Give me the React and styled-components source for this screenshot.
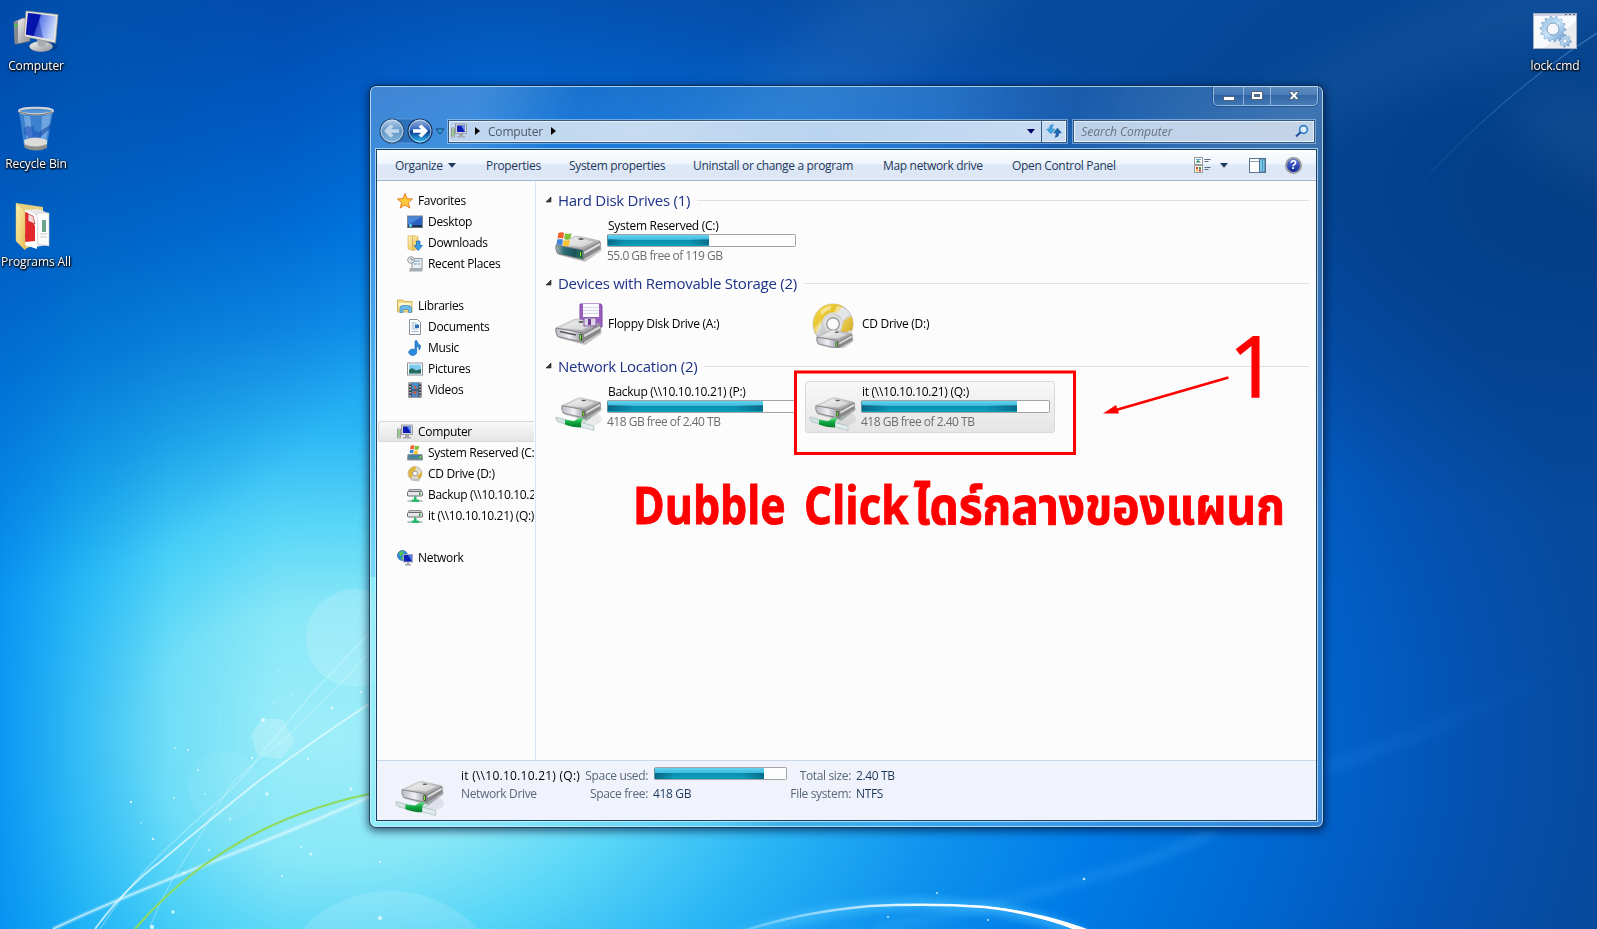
import React from "react";
import styled, { createGlobalStyle, css } from "styled-components";

const uiFont = `"Open Sans", "Noto Sans", "Liberation Sans", sans-serif`;

const GlobalStyle = createGlobalStyle`
  html, body { margin: 0; padding: 0; overflow: hidden; }
  body { font-family: ${uiFont}; font-size: 12px; color: #000; }
  * { box-sizing: border-box; }
  svg { display: block; flex: none; }
`;

/* ---------- Desktop ---------- */

const Desktop = styled.main`
  position: relative;
  width: 1597px;
  height: 929px;
  overflow: hidden;
  background:
    radial-gradient(ellipse 560px 620px at -60px -20px, rgba(0, 52, 145, 0.8), rgba(0, 60, 160, 0.5) 50%, rgba(0, 80, 190, 0) 100%),
    radial-gradient(ellipse 520px 330px at 1597px 190px, rgba(0, 50, 115, 0.6), rgba(0, 60, 140, 0) 100%),
    linear-gradient(90deg, rgba(0, 140, 242, 0.85) 0, rgba(0, 160, 245, 0.55) 80px, rgba(0, 180, 248, 0.2) 170px, rgba(0, 190, 250, 0) 280px),
    radial-gradient(ellipse 1290px 850px at 330px 735px, #9eeef9 0%, #88e7f7 15%, #5cd7f7 24%, #2ab6f5 36%, #0f94ee 48%, #007ce8 60%, #0066d0 75%, #0551b0 89%, #054a9c 100%);
`;

const Wallpaper = styled.svg`
  position: absolute;
  inset: 0;
`;

const Shortcut = styled.div`
  position: absolute;
  left: ${(p) => p.$x}px;
  top: ${(p) => p.$y}px;
  width: 90px;
  height: 72px;
  display: flex;
  flex-direction: column;
  align-items: center;
  justify-content: flex-end;
  gap: ${(p) => p.$gap}px;
  color: #fff;
  line-height: 16px;
  letter-spacing: -0.1px;
  white-space: nowrap;
  text-shadow: 0 1px 2px #000, 1px 1px 2px #000, 0 0 3px rgba(0, 0, 0, 0.7);
`;

/* ---------- Window ---------- */

const Window = styled.section`
  position: absolute;
  left: 369px;
  top: 85px;
  width: 955px;
  height: 743px;
  display: flex;
  flex-direction: column;
  padding: 0 6px 6px;
  border: 1px solid rgba(5, 30, 60, 0.8);
  border-radius: 7px;
  background:
    linear-gradient(90deg, rgba(150, 255, 250, 0.5), rgba(120, 240, 255, 0) 60%) 0 100% / 100% 250px no-repeat,
    linear-gradient(112deg, rgba(255, 255, 255, 0.16) 0, rgba(255, 255, 255, 0.16) 9%, rgba(255, 255, 255, 0) 17%, rgba(80, 180, 255, 0.16) 34%, rgba(80, 180, 255, 0.15) 46%, rgba(255, 255, 255, 0) 52%, rgba(0, 40, 110, 0.12) 57%, rgba(255, 255, 255, 0.06) 65%, rgba(255, 255, 255, 0.12) 75%),
    rgba(130, 185, 235, 0.2);
  box-shadow: inset 0 0 0 1px rgba(210, 240, 255, 0.75), 0 2px 9px 1px rgba(0, 15, 50, 0.65);
`;

const TitleBar = styled.header`
  display: flex;
  justify-content: flex-end;
  height: 32px;
  flex: none;
`;

const CaptionButtons = styled.div`
  display: flex;
  height: 20px;
  margin-right: -1px;
  border: 1px solid rgba(200, 225, 250, 0.65);
  border-top: 0;
  border-radius: 0 0 5px 5px;
  box-shadow: 0 0 0 1px rgba(10, 40, 90, 0.35);
  overflow: hidden;
`;

const CaptionButton = styled.div`
  width: ${(p) => p.$w}px;
  display: flex;
  align-items: center;
  justify-content: center;
  background: linear-gradient(rgba(255, 255, 255, 0.18), rgba(255, 255, 255, 0.08) 48%, rgba(0, 20, 70, 0.12) 50%, rgba(255, 255, 255, 0.06));
  & + & { border-left: 1px solid rgba(200, 225, 250, 0.55); }
`;

const NavRow = styled.div`
  display: flex;
  align-items: center;
  height: 31px;
  padding: 0 2px 5px 0;
  flex: none;
`;

const FieldShell = styled.div`
  display: flex;
  align-items: center;
  height: 23px;
  width: ${(p) => p.$w}px;
  margin-left: ${(p) => p.$ml || 0}px;
  border: 1px solid #34587f;
  box-shadow: 0 0 0 1px rgba(190, 220, 245, 0.5), inset 0 0 0 1px rgba(240, 248, 255, 0.8);
  background: ${(p) => p.$bg};
`;

const AddressText = styled.span`
  color: #4a5a68;
  margin: 0 8px 0 8px;
  letter-spacing: -0.2px;
`;

const FieldSpacer = styled.span` flex: 1; `;

const RefreshCell = styled.div`
  display: flex;
  align-items: center;
  justify-content: center;
  align-self: stretch;
  width: 25px;
  margin-left: 6px;
  border-left: 1px solid #34587f;
`;

const SearchHint = styled.span`
  flex: 1;
  padding-left: 7px;
  font-style: italic;
  color: #68747f;
  letter-spacing: -0.05px;
`;

const Client = styled.div`
  flex: 1;
  min-height: 0;
  display: flex;
  flex-direction: column;
  background: #fcfcfc;
  border: 1px solid #15405f;
  box-shadow: 0 0 0 1px rgba(215, 240, 255, 0.7);
`;

const Toolbar = styled.nav`
  display: flex;
  align-items: center;
  height: 31px;
  flex: none;
  padding: 0 14px 0 18px;
  color: #1e395b;
  border-bottom: 1px solid #a0b4d0;
  background: linear-gradient(#fdfeff 0, #eef5fd 46%, #dfe8f6 50%, #dce6f4 85%, #e6eefa 100%);
`;

const ToolItem = styled.span`
  display: flex;
  align-items: center;
  width: ${(p) => p.$w}px;
  gap: 5px;
  letter-spacing: -0.33px;
  white-space: nowrap;
`;

const ToolIcons = styled.div`
  display: flex;
  align-items: center;
  margin-left: auto;
`;

const IconGap = styled.span` width: ${(p) => p.$w}px; `;

const Body = styled.div`
  flex: 1;
  min-height: 0;
  display: flex;
`;

const NavPane = styled.aside`
  width: 159px;
  flex: none;
  padding: 9px 1px 0 0;
  border-right: 1px solid #d6e3f5;
`;

const navSelected = css`
  border: 1px solid #d9d9d9;
  border-right: 0;
  border-radius: 3px 0 0 3px;
  background: linear-gradient(#f8f8f8, #e5e5e5);
`;

const NavItem = styled.div`
  display: flex;
  align-items: center;
  gap: 5px;
  height: 21px;
  margin-top: ${(p) => (p.$first ? 21 : 0)}px;
  margin-left: 1px;
  padding-left: ${(p) => (p.$child ? 28 : 18)}px;
  border: 1px solid transparent;
  border-right: 0;
  white-space: nowrap;
  overflow: hidden;
  letter-spacing: -0.32px;
  ${(p) => p.$selected && navSelected}
`;

const Content = styled.div`
  flex: 1;
  min-width: 0;
  padding: 3px 7px 0 9px;
`;

const GroupHeader = styled.h2`
  display: flex;
  align-items: center;
  gap: 6px;
  height: 31px;
  margin: 0;
  font-size: 15px;
  line-height: 30px;
  font-weight: 400;
  color: #1e3287;
  letter-spacing: -0.26px;
  white-space: nowrap;
  &::after {
    content: "";
    flex: 1;
    height: 1px;
    background: #e0e0e2;
    margin: 2px 0 0 1px;
  }
`;

const TileRow = styled.div`
  display: flex;
  gap: 4px;
  height: 52px;
  padding-left: 6px;
`;

const Tile = styled.div`
  display: flex;
  align-items: center;
  gap: 4px;
  width: 250px;
  height: 52px;
  padding: 0 4px 0 3px;
  border: 1px solid ${(p) => (p.$selected ? "#d9d9d9" : "transparent")};
  border-radius: 3px;
  background: ${(p) => (p.$selected ? "linear-gradient(#f8f8f8, #e5e5e5)" : "none")};
`;

const TileText = styled.div`
  display: flex;
  flex-direction: column;
  margin-top: -1px;
  line-height: 17px;
  white-space: nowrap;
  letter-spacing: -0.28px;
`;

const TileName = styled.span`
  padding-left: 1px;
  line-height: 16px;
`;

const Muted = styled.span`
  color: #6d6d6d;
  letter-spacing: -0.5px;
`;

const Meter = styled.div`
  width: ${(p) => p.$w}px;
  height: 13px;
  border: 1px solid #a4a4a4;
  border-left-color: #5c8fa0;
  border-radius: 2px;
  background: #fdfdfd;
`;

const MeterFill = styled.div`
  height: 100%;
  background:
    linear-gradient(90deg, rgba(0, 60, 90, 0.5), rgba(0, 60, 90, 0) 18%, rgba(0, 60, 90, 0) 80%, rgba(0, 60, 90, 0.45)) 0 100% / 100% 55% no-repeat,
    linear-gradient(#66d2ee 0, #3bbbe0 45%, #0b8fae 50%, #0ba0bd 100%);
`;

const Details = styled.footer`
  display: flex;
  height: 60px;
  flex: none;
  padding: 5px 0 0 18px;
  border-top: 1px solid #c9d7ea;
  background: #f0f3fc;
`;

const DetailsGrid = styled.div`
  display: grid;
  grid-template-columns: 118px 69px 141px 62px 60px;
  grid-template-rows: 18px 18px;
  margin-left: 16px;
  align-items: center;
  white-space: nowrap;
  color: #1e395b;
  letter-spacing: -0.35px;
`;

const Label = styled.span`
  color: #5a6779;
  text-align: ${(p) => (p.$left ? "left" : "right")};
`;

const Value = styled.span`
  padding-left: ${(p) => p.$pad || 5}px;
  padding-bottom: ${(p) => p.$lift || 0}px;
`;

const DetailTitle = styled.span`
  color: #000;
  letter-spacing: 0.25px;
`;

const Annotations = styled.svg`
  position: absolute;
  inset: 0;
`;

/* ---------- Icons ---------- */

const Defs = () => (
  <defs>
    <linearGradient id="metal" x1="0" y1="0" x2="1" y2="1">
      <stop offset="0" stopColor="#fafafa" /><stop offset="1" stopColor="#8f8f92" />
    </linearGradient>
    <linearGradient id="screen" x1="0" y1="0" x2="1" y2="0.3">
      <stop offset="0" stopColor="#0a1ab8" /><stop offset="0.45" stopColor="#0514b0" /><stop offset="0.5" stopColor="#5f7bea" /><stop offset="1" stopColor="#c5d5fb" />
    </linearGradient>
    <linearGradient id="front" x1="0" y1="0" x2="1" y2="0">
      <stop offset="0" stopColor="#b9b9c2" /><stop offset="0.5" stopColor="#efeff6" /><stop offset="1" stopColor="#8e8e96" />
    </linearGradient>
    <linearGradient id="tealFront" x1="0" y1="0" x2="1" y2="0">
      <stop offset="0" stopColor="#a9b4b6" /><stop offset="0.3" stopColor="#2b6f78" /><stop offset="0.7" stopColor="#1c5058" /><stop offset="1" stopColor="#2d8a78" />
    </linearGradient>
    <linearGradient id="gold" x1="0" y1="0" x2="1" y2="1">
      <stop offset="0" stopColor="#f9de48" /><stop offset="1" stopColor="#cfa212" />
    </linearGradient>
    <linearGradient id="disc" x1="0" y1="0" x2="1" y2="1">
      <stop offset="0" stopColor="#f6f6f6" /><stop offset="0.5" stopColor="#c9c9c9" /><stop offset="1" stopColor="#efefef" />
    </linearGradient>
    <linearGradient id="folder" x1="0" y1="0" x2="1" y2="1">
      <stop offset="0" stopColor="#fdf3b4" /><stop offset="1" stopColor="#e8bd55" />
    </linearGradient>
    <linearGradient id="greenV" x1="0" y1="0" x2="0" y2="1">
      <stop offset="0" stopColor="#6fe08e" /><stop offset="0.5" stopColor="#0ea63f" /><stop offset="1" stopColor="#067a2a" />
    </linearGradient>
    <linearGradient id="backG" x1="0" y1="0" x2="0" y2="1">
      <stop offset="0" stopColor="#b4d0ea" /><stop offset="0.5" stopColor="#6496c6" /><stop offset="1" stopColor="#84b8e0" />
    </linearGradient>
    <linearGradient id="fwdG" x1="0" y1="0" x2="0" y2="1">
      <stop offset="0" stopColor="#9cb8e4" /><stop offset="0.48" stopColor="#2c5fb4" /><stop offset="0.52" stopColor="#0a3c92" /><stop offset="1" stopColor="#35c8f5" />
    </linearGradient>
    <linearGradient id="gearG" x1="0" y1="0" x2="1" y2="1">
      <stop offset="0" stopColor="#8fb4d8" /><stop offset="0.5" stopColor="#c8e6fa" /><stop offset="1" stopColor="#5a8cc8" />
    </linearGradient>
  </defs>
);

const ComputerBig = () => (
  <svg width="48" height="44" viewBox="0 0 48 44">
    <path d="M2 12 L11 8 L18 9 V31 L10 33 L3 34 Z" fill="url(#metal)" stroke="#777" strokeWidth=".6" />
    <path d="M2 12 L6 11 V33 L3 34 Z" fill="#85888c" /><circle cx="4" cy="15.500" r="1.300" fill="#3bdc2b" />
    <ellipse cx="31" cy="37" rx="15" ry="5" fill="#001a50" opacity=".3" />
    <ellipse cx="29" cy="36.500" rx="11.500" ry="5" fill="url(#metal)" stroke="#b8b8b8" strokeWidth=".6" />
    <path d="M25 29 L34 30.500 L33 37 L26 36 Z" fill="#a9acb2" />
    <path d="M14 1 L46 4.500 L43.500 33 L12 26.500 Z" fill="#e8e6e0" stroke="#97948e" strokeWidth=".7" />
    <path d="M16 3 L44 6.300 L41.500 30 L13.800 24.500 Z" fill="url(#screen)" />
    <path d="M16 3 L26 4 L31 28 L13.800 24.500 Z" fill="#0010a0" opacity=".35" />
  </svg>
);

const RecycleBin = () => (
  <svg width="40" height="46" viewBox="0 0 40 46">
    <path d="M3 5 L8 40 Q20 47 31 40 L37 5 Z" fill="#8fc0f0" opacity=".42" />
    <path d="M8 10 L11 35 L17 36 L14 10 Z M26 10 L25 36 L30 34 L35 9 Z" fill="#cfe6ff" opacity=".35" />
    <path d="M8 23q2-5 6-2q5-3 4 3q6 1 4 6q-1 6-6 4q-5 3-4-4q-6-1-4-7Z" fill="#1d50b8" opacity=".55" />
    <path d="M22 27 L35 18 L35 22 L23 32Z" fill="#144aa8" opacity=".6" />
    <path d="M8 34 Q19 29 31 34 L31 41 Q20 47 9 41 Z" fill="#dcdcd8" />
    <path d="M8 38 Q19 43 31 38 L31 42 Q20 47 9 42 Z" fill="#8f8f8c" />
    <ellipse cx="20" cy="5" rx="17" ry="3.200" fill="#6aa2dc" fillOpacity=".7" stroke="#d0d2d4" strokeWidth="2" />
    <path d="M3 6 Q20 12 37 6" fill="none" stroke="#76797c" strokeWidth="1.200" />
  </svg>
);

const ProgramsFolder = () => (
  <svg width="50" height="50" viewBox="0 0 50 50">
    <path d="M5 2 L32 6 V40 L14 48 Z" fill="#e6cf7c" />
    <path d="M15 9 L27 8 L37 12 V44 L24 46 Z" fill="#e8e8e8" />
    <path d="M26 12 L38 12 V45 L27 43 Z" fill="#fcfcfc" stroke="#c8c8c8" strokeWidth=".6" />
    <path d="M14 8 L26 15 V48 L14 44 Z" fill="#fff" />
    <path d="M14 11 L17 12 L24 25 V40 L14 41 Z" fill="#e2282c" />
    <path d="M17 13 L22 15 L24 23 L17 20 Z" fill="#f6d9d4" stroke="#c02c2c" strokeWidth=".7" />
    <path d="M31 19 h4 v12 h-4Z" fill="#6aa58c" /><path d="M29 33h7M29 36h7" stroke="#c5ccd2" />
    <path d="M5 2 L14 9 V33 L12 34 L14 36 V49 L5 40 Z" fill="url(#folder)" stroke="#d9b865" strokeWidth=".5" />
  </svg>
);

const gearPath = (cx, cy, n, r, R) => {
  const pts = [];
  for (let i = 0; i < n * 4; i++) {
    const a = (i / (n * 4)) * Math.PI * 2;
    const k = i % 4 < 2 ? R : r;
    pts.push(`${(cx + k * Math.cos(a)).toFixed(2)} ${(cy + k * Math.sin(a)).toFixed(2)}`);
  }
  return `M${pts.join("L")}Z`;
};

const LockCmd = () => (
  <svg width="46" height="40" viewBox="0 0 46 40">
    <rect x="1.500" y="2.500" width="43" height="35" fill="#f8f9fa" stroke="#a5adb8" />
    <rect x="2" y="3" width="42" height="2" fill="#ccd2df" />
    <path d="M33 3.500h2M37 3.500h2M41 3.500h2" stroke="#4c5f8c" />
    <path d="M44 10 V37 H12Z" fill="#dfe1e6" opacity=".6" />
    <path d={gearPath(21, 18, 14, 10.5, 13)} fill="url(#gearG)" stroke="#7ba3cc" strokeWidth=".6" />
    <circle cx="21" cy="18" r="6" fill="#f4f6f9" stroke="#7f9fc2" />
    <path d={gearPath(33, 30, 8, 4.4, 6.2)} fill="url(#gearG)" stroke="#5f8ab8" strokeWidth=".6" />
    <circle cx="33" cy="30" r="2.300" fill="#f4f6f9" stroke="#6f96c0" strokeWidth=".7" />
  </svg>
);

const Flag = ({ x = 0, y = 0, s = 1 }) => (
  <g transform={`translate(${x} ${y}) scale(${s})`}>
    <path d="M2 1 Q5 -0.500 8 1 L7 7 Q4 5.500 1 7Z" fill="#f0622c" />
    <path d="M9 1.300 Q12 3 16 1 L14.500 7 Q11 9 8 7.300Z" fill="#7fbf3a" />
    <path d="M.8 8 Q4 6.500 6.800 8 L5.800 14 Q3 12.500 0 13.500Z" fill="#3d86d8" />
    <path d="M7.800 8.300 Q11 10 14.200 8.300 L13 14 Q10 16 6.700 14.300Z" fill="#fcc52c" />
  </g>
);

const DriveBody = ({ x = 0, y = 0, s = 1, teal }) => (
  <g transform={`translate(${x} ${y}) scale(${s})`}>
    <path d="M3 17 L30 24 L47 12 L46 16 L30 27 L4 20Z" fill="#000" opacity=".22" />
    <path d="M1 10 L19 1.500 Q21 .8 24 1.200 L45 6 L28 15 Z" fill="url(#metal)" stroke="#9a9a9a" strokeWidth=".5" />
    <path d="M6 9.500 L20 3 L39 6.500 L27 12Z" fill="#f4f4f4" opacity=".55" />
    <path d="M28 15 L45 6 Q46.500 8 45.500 14 L28.500 24.500Z" fill="#88888b" />
    <path d="M29 18 L45 9" stroke="#d9d9db" strokeWidth="2.200" />
    <path d="M1 10 L28 15 L28.500 24.500 L2.500 18.500 Q0 14 1 10Z" fill={teal ? "url(#tealFront)" : "url(#front)"} stroke="#77777a" strokeWidth=".9" />
    <path d="M24.500 16 L27 16.500 V22.500 L24.500 22Z" fill="#1c3c18" />
    <path d="M25.600 17 V21.500" stroke="#7fee2c" strokeWidth="1.200" />
    <ellipse cx="26" cy="4" rx="2.600" ry=".9" fill="#5a5a5a" />
  </g>
);

const SystemDrive = () => (
  <svg width="48" height="48" viewBox="0 0 48 48">
    <DriveBody x={0} y={18} teal /><Flag x={1.5} y={15} s={0.95} />
  </svg>
);

const FloppyDrive = () => (
  <svg width="48" height="48" viewBox="0 0 48 48">
    <path d="M25 4 H46 L47 6 V27 H25 Z" fill="#9a5fc0" stroke="#7a48a6" />
    <rect x="28" y="4" width="16" height="13" fill="#fafafc" />
    <path d="M28 7.500h16M28 10.500h16M28 13.500h16" stroke="#cfcfe6" strokeWidth=".8" />
    <DriveBody x={0} y={18} />
    <rect x="29" y="18" width="12" height="8" fill="#ddd5e8" stroke="#8058a0" /><rect x="33" y="19" width="3" height="6" fill="#6a3c94" />
    <path d="M5 31.500 L21 35" stroke="#555" strokeWidth="1.400" />
  </svg>
);

const CdDrive = () => (
  <svg width="48" height="48" viewBox="-1 -1 48 48">
    <circle cx="23" cy="23" r="20" fill="url(#disc)" stroke="#b2b2b2" strokeWidth=".8" />
    <path d="M4 17 A20 20 0 0 1 33 5.500 L27 12 A11 11 0 0 0 13 18 L6 33 A20 20 0 0 1 4 17Z" fill="url(#gold)" />
    <path d="M41.500 15 A20 20 0 0 1 42 29 L30 33 L34 20Z" fill="url(#gold)" opacity=".9" />
    <path d="M13 16 A12 12 0 0 0 11 26 L7 33 L4 28Z" fill="#fff" opacity=".4" />
    <path d="M27 5 A18 18 0 0 1 40 13 L32 20 A10 10 0 0 0 24 12Z" fill="#fff" opacity=".5" />
    <path d="M10 11 Q14 6 21 4.500 L21 8 Q15 10 12 14Z" fill="#fff" opacity=".45" />
    <circle cx="23" cy="23" r="9" fill="#e4e4e4" opacity=".85" />
    <circle cx="23" cy="23" r="6.300" fill="#fafafa" stroke="#9c9c9c" strokeWidth="1.400" />
    <DriveBody x={6} y={28} s={0.8} />
  </svg>
);

const NetDrive = ({ w = 48 }) => (
  <svg width={w} height={w} viewBox="0 0 48 48">
    <ellipse cx="34" cy="36" rx="13" ry="7" fill="#000" opacity=".07" />
    <path d="M24 38 L30 32 L36 31 L35 35 L28 41Z" fill="#cfe3da" stroke="#9fbcae" strokeWidth=".5" />
    <DriveBody x={6} y={14} s={0.87} />
    <path d="M1 34 L12 37 V41.500 L3 39 Q0 37 1 34Z" fill="#d5e2e2" stroke="#9cb4b4" strokeWidth=".6" />
    <path d="M26 39.500 L39 43 V47.500 L26 44Z" fill="#e3ecec" stroke="#9cb4b4" strokeWidth=".6" />
    <path d="M10 36.500 L19 38 L25 34.500 L28.500 35 L26 39.500 V44.500 Q17 44.500 10 41.500Z" fill="url(#greenV)" />
  </svg>
);

const CaptionGlyph = ({ kind }) => (
  <svg width="16" height="14" viewBox="0 0 16 14">
    {kind === "min" && <rect x="2.500" y="7.500" width="11" height="4" fill="#fff" stroke="#50647f" />}
    {kind === "max" && <><rect x="2.500" y="2.500" width="11" height="8" fill="#fff" stroke="#50647f" /><rect x="5.500" y="5.500" width="5" height="2" fill="#4d77aa" stroke="#50647f" /></>}
    {kind === "close" && (
      <path d="M3 2.500 H6.300 L8 4.700 L9.700 2.500 H13 L10 6.500 L13 10.500 H9.700 L8 8.300 L6.300 10.500 H3 L6 6.500Z" fill="#fff" stroke="#50647f" />
    )}
  </svg>
);

const NavButtons = () => (
  <svg width="70" height="28" viewBox="0 0 70 28">
    <path d="M16 2 H44 A12 12 0 0 1 44 26 H16 A12 12 0 0 1 16 2Z" fill="#1c5ba2" opacity=".55" stroke="#7fb0dd" strokeWidth=".8" />
    <circle cx="16" cy="14" r="12" fill="url(#backG)" stroke="#254a74" strokeWidth="1.200" />
    <circle cx="16" cy="14" r="11" fill="none" stroke="#d5e8f8" strokeOpacity=".7" />
    <path d="M8 14 L14.500 7.500 L17.500 9.500 L15 12.300 H23 V15.800 H15 L17.500 18.500 L14.500 20.500Z" fill="#cfe2f3" opacity=".85" />
    <circle cx="44" cy="14" r="12" fill="url(#fwdG)" stroke="#10305c" strokeWidth="1.200" />
    <circle cx="44" cy="14" r="11" fill="none" stroke="#cfe4f8" strokeOpacity=".75" />
    <path d="M52 14 L45.500 7.500 L42.500 9.500 L45.200 12.300 H37 V15.800 H45.200 L42.500 18.500 L45.500 20.500Z" fill="#fff" />
    <path d="M60 12 H68 L64 17Z" fill="#2fa8dc" stroke="#123e70" />
  </svg>
);

const ComputerSmall = () => (
  <svg width="16" height="16" viewBox="0 0 16 16">
    <path d="M.5 5 H3.500 V14 H.5Z" fill="#e6e6e6" stroke="#8c8c8c" strokeWidth=".8" /><path d="M2 6v7" stroke="#49b02c" />
    <rect x="4.500" y="1" width="11" height="9.500" fill="#d5d6da" stroke="#84858c" strokeWidth=".7" />
    <rect x="6" y="2.500" width="8" height="6.500" fill="#0b1fb4" /><path d="M10 2.500h4v6.500Z" fill="#6c8cf0" />
    <path d="M8 11h4v2h2v1.500h-8V13h2Z" fill="#a7a9ae" />
  </svg>
);

const TriangleRight = () => (
  <svg width="5" height="8" viewBox="0 0 5 8"><path d="M0 0 L5 4 L0 8Z" fill="#000" /></svg>
);

const TriangleDown = ({ color = "#1e395b" }) => (
  <svg width="8" height="5" viewBox="0 0 8 5"><path d="M0 0H8L4 4.800Z" fill={color} /></svg>
);

const Refresh = () => (
  <svg width="16" height="16" viewBox="0 0 16 16">
    <path d="M7.500 1.500 Q3 1.500 3 6 H.5 L4.800 11 L9 6 H6.300 Q6 3.500 7.500 1.500Z" fill="#3fa2e0" stroke="#2a78b8" strokeWidth=".4" />
    <path d="M9 14.500 Q13 14 13 10 H15.500 L11.500 5 L7.500 10 H10 Q10.200 12.500 9 14.500Z" fill="#1f66b0" stroke="#174f90" strokeWidth=".4" />
  </svg>
);

const SearchGlass = () => (
  <svg width="16" height="16" viewBox="0 0 16 16">
    <circle cx="9.500" cy="6.500" r="3.900" fill="#dcedfb" stroke="#2f7fc4" strokeWidth="1.700" /><path d="M6.500 9.300 L2 13.500" stroke="#234f9c" strokeWidth="2" />
  </svg>
);

const ViewIcon = () => (
  <svg width="17" height="16" viewBox="0 0 17 16">
    <rect x=".5" y=".5" width="8" height="7" fill="#fff" stroke="#9a9a9a" /><path d="M2 5 L4 3 L7 5.500 H2Z" fill="#2b8c70" /><path d="M2 2.500h5" stroke="#5fa4d8" />
    <rect x=".5" y="8.500" width="8" height="7" fill="#fff" stroke="#9a9a9a" />
    <rect x="2" y="10" width="2" height="2" fill="#e33" /><rect x="5" y="10" width="2" height="2" fill="#2a9d3a" /><rect x="2" y="12.500" width="2" height="2" fill="#f2b01c" /><rect x="5" y="12.500" width="2" height="2" fill="#b23" />
    <path d="M10.500 2.500h6M10.500 4.500h4M10.500 10.500h6M10.500 12.500h4" stroke="#5b6b80" />
  </svg>
);

const PaneIcon = () => (
  <svg width="17" height="15" viewBox="0 0 17 15">
    <rect x=".5" y=".5" width="16" height="14" fill="#fff" stroke="#5a7391" />
    <path d="M1 3.500h9" stroke="#8da0b8" /><rect x="10.500" y="1" width="5.500" height="13" fill="#8ccbe8" stroke="#41708f" /><path d="M13.500 2v11" stroke="#3fa3d0" strokeWidth="1.500" />
  </svg>
);

const HelpMark = styled.span`
  width: 17px;
  height: 17px;
  border-radius: 50%;
  border: 2px solid #9a9ca2;
  background: linear-gradient(#5b74d8, #10279a);
  color: #fff;
  font: bold 12px/13px "Liberation Sans", sans-serif;
  text-align: center;
`;

const GroupArrow = () => (
  <svg width="7" height="7" viewBox="0 0 7 7"><path d="M6 1 V6 H1Z" fill="#404040" stroke="#1c1c1c" strokeWidth=".6" /></svg>
);

const navIcons = {
  star: <path d="M8 .5 L10.200 5.600 L15.500 6 L11.400 9.500 L12.700 15 L8 12 L3.300 15 L4.600 9.500 L.5 6 L5.800 5.600Z" fill="#ffc83a" stroke="#e4761c" strokeWidth=".9" />,
  desktop: <><rect x=".5" y="2" width="15" height="11.500" fill="#2a62c4" stroke="#7d8894" /><path d="M1 2.500h14L3 10H1Z" fill="#5a94e4" opacity=".7" /><rect x="1" y="11" width="14" height="2.300" fill="#1f3350" /><circle cx="3.500" cy="11.500" r="1.600" fill="#64d6f5" /></>,
  downloads: <><path d="M1 1 L6 .5 L11 1.500 V14 L6 15.500 L1 14Z" fill="url(#folder)" stroke="#d3a94a" strokeWidth=".6" /><path d="M5.500 1 V15" stroke="#caa145" strokeWidth=".7" /><path d="M9.500 6 H13 V10.500 H15.500 L11.300 15.500 L7 10.500 H9.500Z" fill="#3a9ce6" stroke="#1b66ad" strokeWidth=".7" /></>,
  recent: <><rect x="5" y="2.500" width="10" height="10" fill="#eceff2" stroke="#8f979e" /><path d="M7 5h6M7 8h3M11 8h2" stroke="#5d9cc8" /><circle cx="4" cy="4" r="3.300" fill="#f0f4f8" stroke="#8c959e" /><path d="M4 2v2h2" stroke="#555" fill="none" strokeWidth=".8" /><path d="M3 12 H15.500 V15.500 H2Z" fill="#a8adb2" /></>,
  libraries: <><path d="M.5 2 H6 L7 3.500 H15 V14 H.5Z" fill="#f4da86" stroke="#cfa64a" strokeWidth=".8" /><path d="M2 5h12v3H2Z" fill="#fff6cf" /><path d="M3 14.500 V10 Q3 7.500 6 7.500 H11 Q14 7.500 14.500 10 V14.500 H11.500 V11.500 H6 V14.500Z" fill="#6dbbe8" stroke="#3b88bd" strokeWidth=".7" /></>,
  documents: <><path d="M2.500 .5 H10.500 L13.500 3.500 V15.500 H2.500Z" fill="#fff" stroke="#8b9199" /><path d="M4.500 4h5M4.500 6h3M4.500 8h3M4.500 10h7M4.500 12.500h7" stroke="#8fa9c4" strokeWidth=".9" /><rect x="8" y="5.500" width="4" height="3.500" fill="#2c6fb8" /></>,
  music: <path d="M8 1 L9.700 .5 Q10.500 4 13.500 5.500 Q14 8 12 10 Q12.500 7 9.700 6 V12 A4 3.200 0 1 1 8 9.600Z" fill="#2a8bdc" stroke="#1560a8" strokeWidth=".6" />,
  pictures: <><rect x=".5" y="2" width="15" height="12" fill="#fff" stroke="#8b9199" /><rect x="2" y="3.500" width="12" height="9" fill="#7ecbef" /><path d="M2 9 L5 7 L9 9.500 L14 8 V12.500 H2Z" fill="#256d5c" /></>,
  videos: <><rect x="1.500" y=".5" width="13" height="15" fill="#34383e" /><path d="M3 1v14M13 1v14" stroke="#e5e8ea" strokeWidth="1.300" strokeDasharray="1.500 1.500" /><rect x="4.500" y="1" width="7" height="6.500" fill="#3e94d8" /><rect x="4.500" y="8.500" width="7" height="6.500" fill="#4a86c8" /><path d="M5 2 L11 6 L8 7Z M5 10 L10 9 L9 13Z" fill="#c65a3c" /></>,
  system: <><Flag x={2.5} y={0} s={0.62} /><path d="M1 9.500 H15 L15.500 15 H.5Z" fill="#5b7f92" stroke="#8d9499" /><path d="M2 11.500h10" stroke="#2f88a0" strokeWidth="1.500" /><rect x="12.500" y="11" width="1.500" height="2.500" fill="#5cdd3c" /></>,
  cd: <><circle cx="8" cy="7.500" r="7" fill="#e0dcc8" stroke="#a9a593" strokeWidth=".7" /><path d="M1.500 6 A7 7 0 0 1 9 .7 L8.500 4 L4 12.500 A7 7 0 0 1 1.500 6Z M14.800 6 A7 7 0 0 1 12 13 L10 10Z" fill="#dfb53a" /><circle cx="8" cy="7.500" r="2.400" fill="#fff" stroke="#999" /><path d="M3 12 L12 13 L14 11.500 L12 15.500 L4 14.500Z" fill="#c2c2c6" /></>,
  netdrive: <><path d="M2 2.500 H14 L15.500 8.500 H.5Z" fill="#cfcfd3" stroke="#77777c" strokeWidth=".8" /><rect x=".5" y="4.500" width="15" height="4.500" rx="1" fill="#e6e6ea" stroke="#6c6c72" /><rect x="12" y="5.500" width="1.500" height="2.500" fill="#2a9c2c" /><path d="M7 9.500h2.500v3H12V15H4.500V12.500H7Z" fill="#25b868" /><path d="M.5 14h4M12 14h3.500" stroke="#a7b0b0" strokeWidth="1.600" /></>,
  network: <><circle cx="5.500" cy="5.500" r="5" fill="#2c8de0" stroke="#1f62a8" strokeWidth=".7" /><path d="M2 3 Q5 0 7 1.500 Q6 5 3 6.500Z M3 8 L6 7 L6 10Z" fill="#54c24c" /><rect x="6.500" y="4.500" width="9" height="7.500" fill="#0c22b8" stroke="#a9acb8" /><path d="M11 5h4v6.500Z" fill="#5478e8" /><path d="M10 12.500h2v1.500h2v1.500H8V14h2Z" fill="#9da0a8" /></>,
};

const NavIcon = ({ name }) =>
  name === "computer" ? <ComputerSmall /> : <svg width="16" height="16" viewBox="0 0 16 16">{navIcons[name]}</svg>;

/* ---------- Data ---------- */

const navItems = [
  { icon: "star", label: "Favorites" },
  { icon: "desktop", label: "Desktop", child: true },
  { icon: "downloads", label: "Downloads", child: true },
  { icon: "recent", label: "Recent Places", child: true },
  { icon: "libraries", label: "Libraries", first: true },
  { icon: "documents", label: "Documents", child: true },
  { icon: "music", label: "Music", child: true },
  { icon: "pictures", label: "Pictures", child: true },
  { icon: "videos", label: "Videos", child: true },
  { icon: "computer", label: "Computer", first: true, selected: true },
  { icon: "system", label: "System Reserved (C:)", child: true },
  { icon: "cd", label: "CD Drive (D:)", child: true },
  { icon: "netdrive", label: "Backup (\\\\10.10.10.21) (P:)", child: true },
  { icon: "netdrive", label: "it (\\\\10.10.10.21) (Q:)", child: true },
  { icon: "network", label: "Network", first: true },
];

const groups = [
  { title: "Hard Disk Drives (1)", tiles: [{ icon: <SystemDrive />, name: "System Reserved (C:)", free: "55.0 GB free of 119 GB", used: 54 }] },
  { title: "Devices with Removable Storage (2)", tiles: [{ icon: <FloppyDrive />, name: "Floppy Disk Drive (A:)" }, { icon: <CdDrive />, name: "CD Drive (D:)" }] },
  {
    title: "Network Location (2)",
    tiles: [
      { icon: <NetDrive />, name: "Backup (\\\\10.10.10.21) (P:)", free: "418 GB free of 2.40 TB", used: 83 },
      { icon: <NetDrive />, name: "it (\\\\10.10.10.21) (Q:)", free: "418 GB free of 2.40 TB", used: 83, selected: true },
    ],
  },
];

const sparkles = [
  [263, 720, 2], [332, 708, 1.5], [267, 794, 1.8], [188, 750, 1], [252, 758, 1.2], [308, 759, 1.2], [351, 789, 1.6], [131, 802, 1.2],
  [174, 798, 1], [230, 819, 1], [153, 839, 1.2], [141, 823, .8], [311, 854, 1.5], [301, 847, 1], [173, 912, 1.8], [184, 873, 1.6],
  [219, 720, .8], [274, 703, .8], [278, 670, .8], [292, 694, .8], [361, 692, 1.2], [198, 770, .9], [205, 794, .8], [175, 748, .9], [209, 850, 1],
  [152, 927, 2.2], [380, 918, 2], [282, 876, 1], [380, 862, 1], [1084, 879, 1.3], [937, 893, 1], [888, 917, 1], [988, 920, 1],
];

const WallpaperArt = () => (
  <Wallpaper width="1597" height="929" viewBox="0 0 1597 929">
    <Defs />
    <defs>
      <filter id="glow" x="-20%" y="-50%" width="140%" height="200%"><feGaussianBlur stdDeviation="5" /></filter>
      <filter id="soft" x="-20%" y="-50%" width="140%" height="200%"><feGaussianBlur stdDeviation="0.6" /></filter>
      <filter id="wide" x="-20%" y="-50%" width="140%" height="200%"><feGaussianBlur stdDeviation="26" /></filter>
      <linearGradient id="orb" x1="0" y1="0" x2="0" y2="1"><stop offset="0" stopColor="#fff" stopOpacity=".14" /><stop offset="1" stopColor="#fff" stopOpacity=".06" /></linearGradient>
      <linearGradient id="strand" x1="0" y1="0" x2="1" y2="0"><stop offset="0" stopColor="#bfe8ff" stopOpacity=".3" /><stop offset=".5" stopColor="#eaf8ff" /><stop offset="1" stopColor="#fff" /></linearGradient>
      <linearGradient id="fadeIn" gradientUnits="userSpaceOnUse" x1="1400" y1="0" x2="1597" y2="0"><stop offset="0" stopColor="#7fb8ea" stopOpacity="0" /><stop offset="1" stopColor="#7fb8ea" /></linearGradient>
      <linearGradient id="fadeOut" gradientUnits="userSpaceOnUse" x1="1324" y1="0" x2="1580" y2="0"><stop offset="0" stopColor="#3c9cff" /><stop offset="1" stopColor="#3c9cff" stopOpacity="0" /></linearGradient>
    </defs>
    <g filter="url(#wide)" fill="#8fc0e8" opacity=".09">
      <path d="M560 260 L880 -40 H1050 L700 260Z" /><path d="M1150 170 Q1380 10 1640 -60 V20 Q1400 60 1200 180Z" />
      <path d="M1500 90 H1640 V210 Q1540 180 1500 90Z" />
    </g>
    <circle cx="355" cy="638" r="49" fill="#fff" opacity=".15" />
    <path d="M251 735 L262 719 L283 719 L295 742 L281 759 L257 755Z" fill="#fff" opacity=".2" filter="url(#soft)" />
    <circle cx="224" cy="787" r="36" fill="#fff" opacity=".06" />
    <circle cx="390" cy="1012" r="121" fill="url(#orb)" />
    <path d="M876 929 Q1000 905 1084 879 Q1160 860 1215 830" fill="none" stroke="#5cc2ff" strokeWidth="9" opacity=".2" filter="url(#glow)" />
    <path d="M1324 768 Q1460 725 1580 655" fill="none" stroke="url(#fadeOut)" strokeWidth="14" opacity=".13" filter="url(#glow)" />
    <g fill="none" filter="url(#soft)">
      <path d="M53 929 C100 906 150 887 197 868 S300 828 369 797" stroke="#fff" strokeWidth="5" opacity=".22" />
      <path d="M53 929 C100 906 150 887 197 868 S300 828 369 797" stroke="#d6f7ff" strokeWidth="1.600" opacity=".75" />
      <path d="M95 929 Q125 888 160 862 Q213 817 260 780 Q317 738 369 704" stroke="#e6fbff" strokeWidth="1.900" opacity=".75" />
      <path d="M100 929 Q124 892 150 865 Q177 837 213 806 Q245 778 260 755 L310 696 L369 633" stroke="#e4fbff" strokeWidth="1.300" opacity=".35" />
      <path d="M150 927 Q165 890 180 867 Q205 828 233 782 Q260 757 287 737 Q330 695 369 653" stroke="#e4fbff" strokeWidth="1.200" opacity=".32" />
      <path d="M135 929 Q162 897 200 868 Q250 832 300 814 Q335 801 369 794" stroke="#8edb5e" strokeWidth="2.100" />
      <path d="M1597 33 Q1500 95 1410 195" stroke="url(#fadeIn)" strokeWidth="1.300" opacity=".45" />
    </g>
    <path d="M740 935 Q860 895 960 906 Q1020 908 1085 935" fill="none" stroke="#4cc2ff" strokeWidth="9" opacity=".7" filter="url(#glow)" />
    <path d="M740 932 Q800 912 870 906 Q930 903 985 907 Q1030 912 1086 931" fill="none" stroke="url(#strand)" strokeWidth="2.600" filter="url(#soft)" />
    <path d="M950 904.500 Q1000 905 1045 916 Q1065 921 1090 930 L1075 930 Q1020 908 950 904.500Z" fill="#fff" />
    {sparkles.map(([x, y, r]) => <circle key={`${x}-${y}`} cx={x} cy={y} r={r} fill="#e9fcff" opacity=".8" filter="url(#soft)" />)}
  </Wallpaper>
);

/* ---------- App ---------- */

export default function App() {
  return (
    <Desktop>
      <GlobalStyle />
      <WallpaperArt />
      <Shortcut $x={-9} $y={2} $gap={4}><ComputerBig />Computer</Shortcut>
      <Shortcut $x={-9} $y={100} $gap={4}><RecycleBin />Recycle Bin</Shortcut>
      <Shortcut $x={-9} $y={198} $gap={3}><ProgramsFolder />Programs All</Shortcut>
      <Shortcut $x={1510} $y={2} $gap={7}><LockCmd />lock.cmd</Shortcut>

      <Window>
        <TitleBar>
          <CaptionButtons>
            <CaptionButton $w={29}><CaptionGlyph kind="min" /></CaptionButton>
            <CaptionButton $w={27}><CaptionGlyph kind="max" /></CaptionButton>
            <CaptionButton $w={47}><CaptionGlyph kind="close" /></CaptionButton>
          </CaptionButtons>
        </TitleBar>
        <NavRow>
          <NavButtons />
          <FieldShell $w={620} $ml={2} $bg="linear-gradient(90deg, #bcd4ee, #c6dbf0 30%, #b9d4ef 60%, #c8dcf2)">
            <IconGap $w={2} /><ComputerSmall /><IconGap $w={8} /><TriangleRight />
            <AddressText>Computer</AddressText>
            <TriangleRight />
            <FieldSpacer />
            <TriangleDown color="#00006a" />
            <RefreshCell><Refresh /></RefreshCell>
          </FieldShell>
          <FieldShell $w={242} $ml={6} $bg="linear-gradient(90deg, #bcd2ea, #c4d4e8)">
            <SearchHint>Search Computer</SearchHint><SearchGlass /><IconGap $w={4} />
          </FieldShell>
        </NavRow>
        <Client>
          <Toolbar>
            <ToolItem $w={91}>Organize<TriangleDown /></ToolItem>
            <ToolItem $w={83}>Properties</ToolItem>
            <ToolItem $w={124}>System properties</ToolItem>
            <ToolItem $w={190}>Uninstall or change a program</ToolItem>
            <ToolItem $w={129}>Map network drive</ToolItem>
            <ToolItem $w={120}>Open Control Panel</ToolItem>
            <ToolIcons>
              <ViewIcon /><IconGap $w={9} /><TriangleDown /><IconGap $w={21} /><PaneIcon /><IconGap $w={19} /><HelpMark>?</HelpMark>
            </ToolIcons>
          </Toolbar>
          <Body>
            <NavPane>
              {navItems.map((n) => (
                <NavItem key={n.label} $child={n.child} $first={n.first} $selected={n.selected}>
                  <NavIcon name={n.icon} />{n.label}
                </NavItem>
              ))}
            </NavPane>
            <Content>
              {groups.map((g) => (
                <React.Fragment key={g.title}>
                  <GroupHeader><GroupArrow /><span>{g.title}</span></GroupHeader>
                  <TileRow>
                    {g.tiles.map((t) => (
                      <Tile key={t.name} $selected={t.selected}>
                        {t.icon}
                        <TileText>
                          <TileName>{t.name}</TileName>
                          {t.free && <><Meter $w={189}><MeterFill style={{ width: `${t.used}%` }} /></Meter><Muted>{t.free}</Muted></>}
                        </TileText>
                      </Tile>
                    ))}
                  </TileRow>
                </React.Fragment>
              ))}
            </Content>
          </Body>
          <Details>
            <NetDrive w={50} />
            <DetailsGrid>
              <DetailTitle>{"it (\\\\10.10.10.21) (Q:)"}</DetailTitle>
              <Label>Space used:</Label>
              <Value $pad={6} $lift={3}><Meter $w={133}><MeterFill style={{ width: "83%" }} /></Meter></Value>
              <Label>Total size:</Label><Value>2.40 TB</Value>
              <Label $left>Network Drive</Label>
              <Label>Space free:</Label><Value>418 GB</Value>
              <Label>File system:</Label><Value>NTFS</Value>
            </DetailsGrid>
          </Details>
        </Client>
      </Window>

      <Annotations width="1597" height="929" viewBox="0 0 1597 929">
        <rect x="795.500" y="372" width="279" height="81.500" fill="none" stroke="#f00" strokeWidth="3" />
        <path d="M1228.500 377.500 L1116 410" stroke="#f00" strokeWidth="2.600" />
        <path d="M1103 413.500 L1116 405 L1119 413.500Z" fill="#f00" />
        <text x="1229" y="396.500" fontFamily="'Open Sans', sans-serif" fontSize="85" fill="#f00" stroke="#f00" strokeWidth="1.400">1</text>
        <g fontFamily="'Open Sans', 'Noto Sans', 'Noto Sans Thai', sans-serif" fontWeight="700" fontSize="52" fill="#f00" stroke="#f00" strokeWidth="1">
          <text transform="translate(633 524) scale(.825 1)" textLength="185" lengthAdjust="spacingAndGlyphs">Dubble</text>
          <text transform="translate(804 524) scale(.85 1)" textLength="123" lengthAdjust="spacingAndGlyphs">Click</text>
          <text x="914" y="524" textLength="371" lengthAdjust="spacingAndGlyphs">ไดร์กลางของแผนก</text>
        </g>
      </Annotations>
    </Desktop>
  );
}
